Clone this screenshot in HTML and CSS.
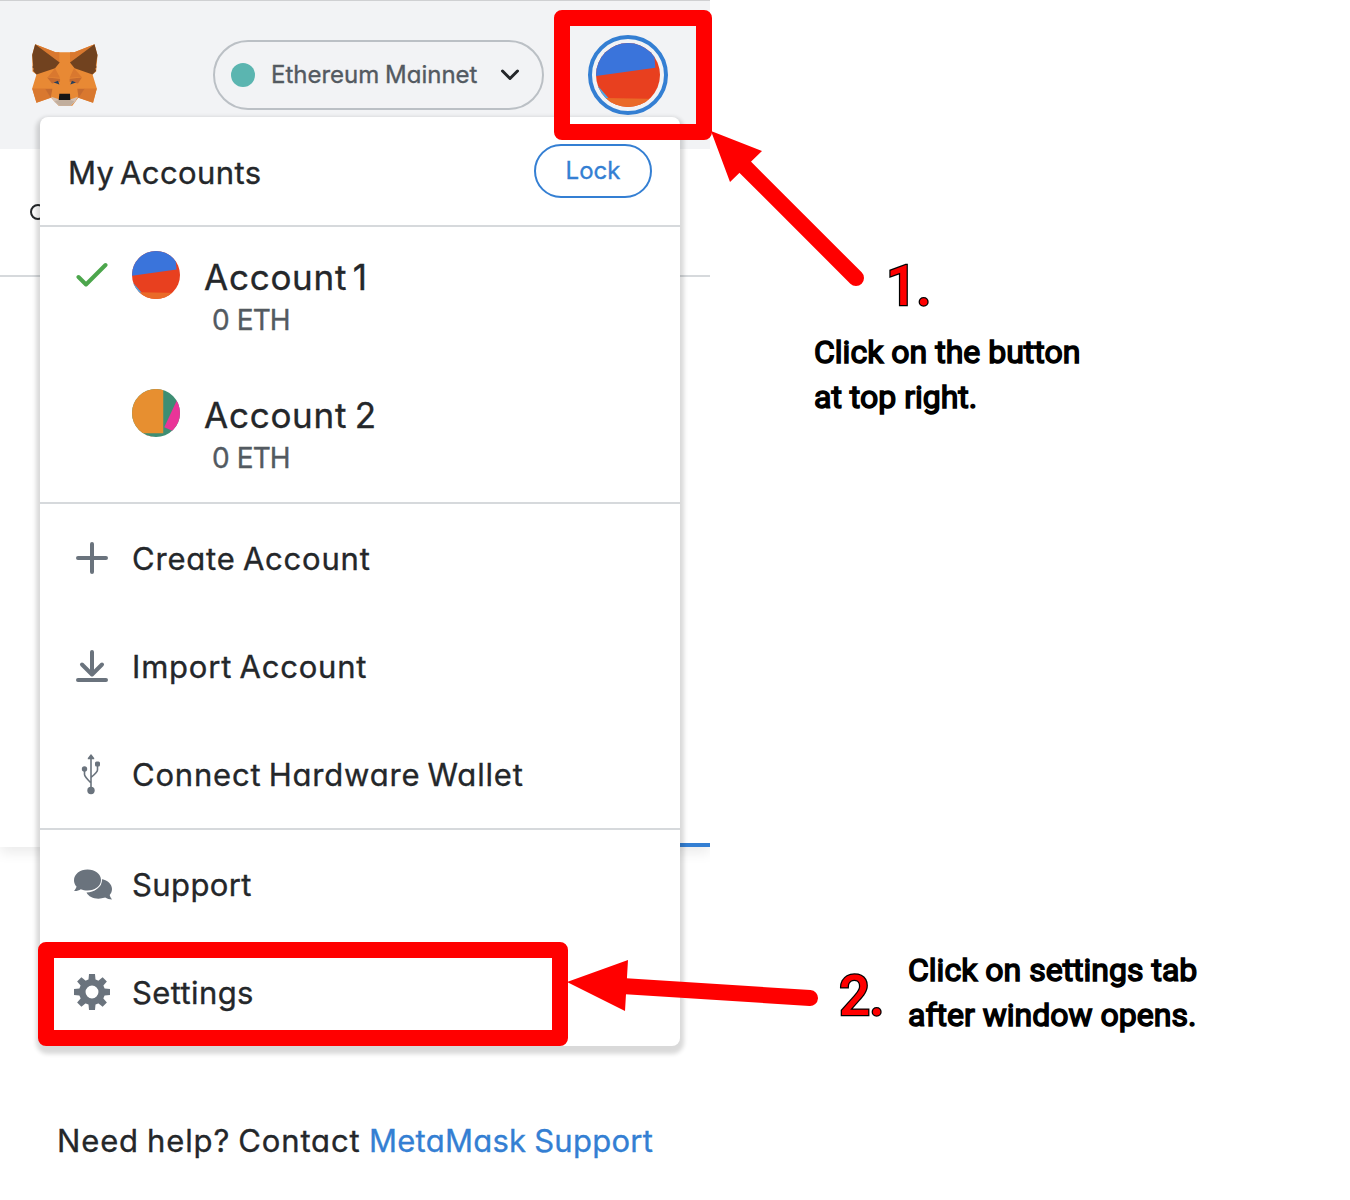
FILE: index.html
```html
<!DOCTYPE html>
<html lang="en">
<head>
<meta charset="utf-8">
<title>MetaMask settings guide</title>
<link rel="stylesheet" href="styles.css">
</head>
<body>
<svg class="defs" width="0" height="0" aria-hidden="true">
  <symbol id="avatar-one" viewBox="0 0 96 96">
    <path fill="#e8401f" d="M0 0h96v96H0z"/>
    <path fill="#3a74db" d="M0 0h86l3 37L0 49.500z"/>
    <path fill="#4aa8ea" d="M0 61l19 22v13H0z"/>
    <path fill="#ea6a28" d="M15 82.500l81 1.500v12H15z"/>
  </symbol>
  <symbol id="avatar-two" viewBox="0 0 96 96">
    <path fill="#3e8e73" d="M0 0h96v96H0z"/>
    <path fill="#e78f30" d="M0 0h62.500v88.500H0z"/>
    <path fill="#ea3498" d="M90 22L64.500 76.500 82 84h14V22z"/>
    <path fill="#d8502c" d="M22 90l20 6H22z"/>
  </symbol>
</svg>
<main class="stage">
  <section class="wallet">
    <header class="topbar">
      <svg class="fox" viewBox="96 132 198 187">
        <path fill="#e88934" d="M105 133l61 24h57l61-24 9 33-4 49-11 9 13 42-11 43-45-15-18 24h-41l-23-24-44 15-13-43 13-42-12-9-1-50z"/>
        <path fill="#d9782f" d="M105 133l62 24 12 31zM284 133l-61 24-13 31zM167 157h11v30zM223 157h-13v30z"/>
        <path fill="#71421f" d="M105 133l74 55-14 17-56 19-10-11 2-6-4-5 2-6-3-31zM284 133l-74 55 14 17 54 19 11-11-3-6 4-5-2-6 5-31z"/>
        <path fill="#d9782f" d="M96 266h39l18 27-44 16zM291 266h-37l-20 27 45 16z"/>
        <path fill="#c66b2f" d="M135 267h22l-5 27zM254 267h-22l4 27zM141 233l39 4v9l-24 5zM246 233l-37 4v9l25 5z"/>
        <path fill="#d9782f" d="M165 205l15 29-37-2zM222 205l-13 29 37-2z"/>
        <path fill="#253f5e" d="M161 248l13-5 4 11zM228 248l-12-5-5 11z"/>
        <path fill="#d5c0b1" d="M153 291l24 8h35l22-8-9 16-13 11h-35l-14-11z"/>
        <path fill="#c1ae9d" d="M164 304l14-3h32l13 4-11 13h-34z"/>
        <path fill="#171515" d="M178 282h32l1 19h-35z"/>
      </svg>
      <div class="network">
        <span class="network-dot"></span>
        <span class="network-name">Ethereum Mainnet</span>
        <svg class="chevron" viewBox="0 0 20 14"><path d="M2.500 3L10 10.500 17.500 3"/></svg>
      </div>
      <div class="identity"><svg class="identity-icon"><use href="#avatar-one"/></svg></div>
    </header>
    <div class="status"><span class="status-dot"></span></div>
    <div class="overview"><div class="tab-line"></div></div>
    <footer class="help"><span class="help-text">Need help? Contact</span><a class="help-link">MetaMask Support</a></footer>

    <nav class="menu">
      <div class="menu-head"><h1 class="menu-title">My Accounts</h1><button class="lock">Lock</button></div>
      <div class="accounts">
        <div class="account">
          <svg class="check" viewBox="0 0 32 26"><path d="M2.500 15L10 22.500 29.500 3"/></svg>
          <svg class="account-icon"><use href="#avatar-one"/></svg>
          <div class="account-info"><div class="account-name name-one">Account 1</div><div class="balance">0 ETH</div></div>
        </div>
        <div class="account">
          <span class="check"></span>
          <svg class="account-icon"><use href="#avatar-two"/></svg>
          <div class="account-info"><div class="account-name">Account 2</div><div class="balance">0 ETH</div></div>
        </div>
      </div>
      <div class="group">
        <div class="item">
          <svg class="icon" viewBox="0 0 40 40"><path class="line" d="M20 6v28M6 20h28"/></svg>
          <span class="label label-wide">Create Account</span>
        </div>
        <div class="item">
          <svg class="icon" viewBox="0 0 40 40"><path class="line" d="M20 6v21M10 18.500l10 10 10-10M6 34h28"/></svg>
          <span class="label label-wide">Import Account</span>
        </div>
        <div class="item">
          <svg class="icon" viewBox="0 0 40 40">
            <path class="thin" d="M19 3v32M12.500 14v6.500q0 2 6.500 8.500M25.500 9v7q0 2-6.500 7.500"/>
            <path class="solid" d="M19 0l3.200 4v1.300h-6.400V4z"/>
            <rect class="solid" x="23" y="7.500" width="5" height="5" rx="1.500"/>
            <circle class="solid" cx="12.500" cy="15" r="2.700"/><circle class="solid" cx="19" cy="36.500" r="3.700"/>
          </svg>
          <span class="label label-wide">Connect Hardware Wallet</span>
        </div>
      </div>
      <div class="group">
        <div class="item">
          <svg class="icon" viewBox="0 0 40 40">
            <path class="solid" d="M29 15c6.500 1 11 5 11 10 0 2.500-1 4.500-2.300 6 .2 1.500 1.200 2.800 2.300 4.500-2.500 0-5-.8-6.800-2-8 2.700-16 .5-18.700-5 8 0 14.500-5 14.500-13.500z"/>
            <path class="solid bubble" d="M15.500 5.500C23 5.500 29 10 29 16s-6 10.500-13.500 10.500c-2.500 0-4.700-.5-6.700-1.300C7 26.500 4.500 27.200 2 27c1.200-1.500 2.200-2.900 2.500-4.500C2.800 20.700 2 18.500 2 16.200 2 10.200 8 5.500 15.500 5.500z"/>
          </svg>
          <span class="label">Support</span>
        </div>
        <div class="item">
          <svg class="icon" viewBox="-20 -20 40 40">
            <g class="solid">
              <path id="tooth" d="M-3.700-10L-3-18h6l.7 8z"/>
              <use href="#tooth" transform="rotate(45)"/><use href="#tooth" transform="rotate(90)"/><use href="#tooth" transform="rotate(135)"/><use href="#tooth" transform="rotate(180)"/><use href="#tooth" transform="rotate(225)"/><use href="#tooth" transform="rotate(270)"/><use href="#tooth" transform="rotate(315)"/>
            </g>
            <circle class="gear-ring" r="9.700"/>
          </svg>
          <span class="label">Settings</span>
        </div>
      </div>
    </nav>
  </section>

  <div class="marker marker-avatar"></div>
  <div class="marker marker-settings"></div>
  <svg class="arrows" viewBox="0 0 1350 1200">
    <path class="shaft" d="M743 165L856 278M622 986L810 998"/>
    <path class="head" d="M711 131l51 20-32 31zM567 982l61-22-3 51z"/>
  </svg>
  <div class="number number-one">1.</div>
  <p class="note note-one">Click on the button<br>at top right.</p>
  <div class="number number-two">2.</div>
  <p class="note note-two">Click on settings tab<br>after window opens.</p>
</main>
</body>
</html>
```
FILE: styles.css
```css
* { box-sizing: border-box; }
body { margin: 0; background: #fff; color: #24272a; font-family: Inter, "Open Sans", sans-serif; font-feature-settings: "cv11" 1; }
.defs { position: absolute; }
.stage { position: relative; width: 1350px; height: 1200px; overflow: hidden; }

.wallet { position: relative; width: 710px; height: 1200px; display: flex; flex-direction: column; -webkit-text-stroke: .35px currentColor; }
.topbar { height: 149px; flex: none; display: flex; align-items: center; background: #f2f3f5; border-top: 1px solid #cfd0d2; padding: 0 42px 0 32px; }
.fox { width: 66px; height: 62px; }
.network { width: 331px; height: 70px; margin-left: 115px; display: flex; align-items: center; border: 2px solid #bbc0c5; border-radius: 35px; padding: 0 22px 0 16px; }
.network-dot { width: 24px; height: 24px; border-radius: 50%; background: #5bb5b0; }
.network-name { margin-left: 16px; width: 206px; font-size: 24px; line-height: 32px; color: #535a61; white-space: nowrap; word-spacing: -1px; }
.chevron { width: 20px; height: 14px; margin-left: 23px; fill: none; stroke: #24272a; stroke-width: 3; stroke-linecap: round; stroke-linejoin: round; }
.identity { width: 80px; height: 80px; margin-left: 44px; border: 4px solid #347fd3; border-radius: 50%; padding: 4px; }
.identity-icon { display: block; width: 64px; height: 64px; border-radius: 50%; }
.status { height: 128px; flex: none; border-bottom: 2px solid #d6d9dc; padding: 55px 0 0 30px; }
.status-dot { display: block; width: 16px; height: 16px; border: 2px solid #24272a; border-radius: 50%; }
.overview { height: 570px; flex: none; display: flex; align-items: flex-end; justify-content: flex-end; box-shadow: 0 6px 12px rgba(0, 0, 0, .08); clip-path: inset(0 0 -24px 0); }
.tab-line { width: 355px; height: 4px; background: #347fd3; }
.help { margin-top: 274px; padding-left: 57px; display: flex; gap: 9px; font-size: 31px; line-height: 40px; white-space: nowrap; }
.help-text { width: 303px; letter-spacing: .87px; word-spacing: -1.5px; }
.help-link { color: #347fd3; letter-spacing: .25px; word-spacing: -1px; }

.menu { position: absolute; left: 40px; top: 117px; width: 640px; height: 929px; background: #fff; border-radius: 8px; box-shadow: 0 4px 4px 4px rgba(0, 0, 0, .15); }
.menu-head { height: 110px; display: flex; align-items: center; justify-content: space-between; padding: 0 28px; border-bottom: 2px solid #d6d9dc; }
.menu-title { margin: 3px 0 0; font-size: 31px; line-height: 40px; font-weight: 400; letter-spacing: .4px; word-spacing: -3.5px; }
.lock { width: 118px; height: 54px; border: 2px solid #347fd3; border-radius: 27px; background: #fff; color: #347fd3; font: 400 24px/32px Inter, sans-serif; padding: 0; -webkit-text-stroke: .35px currentColor; }
.accounts { height: 275px; }
.account { height: 138px; display: flex; padding: 24px 0 0 36px; }
.check { width: 32px; height: 26px; margin-top: 11px; flex: none; fill: none; stroke: #4ca64c; stroke-width: 4; stroke-linecap: round; stroke-linejoin: round; }
.account-icon { width: 48px; height: 48px; margin-left: 24px; border-radius: 50%; flex: none; }
.account-info { margin-left: 24px; }
.account-name { margin-top: 1px; font-size: 35px; line-height: 50px; letter-spacing: .75px; word-spacing: -3px; }
.name-one { word-spacing: -5px; }
.balance { margin-left: 8px; font-size: 28px; line-height: 36px; color: #535a61; letter-spacing: -.9px; word-spacing: 1px; }
.group { border-top: 2px solid #d6d9dc; }
.item { height: 108px; display: flex; align-items: center; padding-left: 32px; }
.icon { width: 40px; height: 40px; flex: none; overflow: visible; }
.label { margin: 1px 0 0 20px; font-size: 31px; line-height: 40px; white-space: nowrap; letter-spacing: .4px; }
.label-wide { letter-spacing: .8px; word-spacing: -2.2px; }
.line { fill: none; stroke: #6a737d; stroke-width: 4; stroke-linecap: round; stroke-linejoin: round; }
.thin { fill: none; stroke: #6a737d; stroke-width: 1.6; }
.solid { fill: #6a737d; }
.bubble { stroke: #fff; stroke-width: 2; paint-order: stroke; }
.gear-ring { fill: none; stroke: #6a737d; stroke-width: 6.500; }

.marker { position: absolute; border: 16px solid #f00; border-radius: 8px; }
.marker-avatar { left: 554px; top: 10px; width: 158px; height: 130px; }
.marker-settings { left: 38px; top: 942px; width: 530px; height: 104px; }
.arrows { position: absolute; left: 0; top: 0; width: 1350px; height: 1200px; }
.shaft { fill: none; stroke: #f00; stroke-width: 16; stroke-linecap: round; }
.head { fill: #f00; }
.number { position: absolute; font: 500 55px/64px Roboto, sans-serif; color: #f00; letter-spacing: -1px; -webkit-text-stroke: 2.500px #000; paint-order: stroke fill; }
.number-one { left: 886px; top: 254px; }
.number-two { left: 839px; top: 964px; }
.note { position: absolute; margin: 0; font: 400 32px/45px Roboto, sans-serif; color: #000; -webkit-text-stroke: 1.500px #000; white-space: nowrap; }
.note-one { left: 814px; top: 330px; }
.note-two { left: 908px; top: 948px; }
```
